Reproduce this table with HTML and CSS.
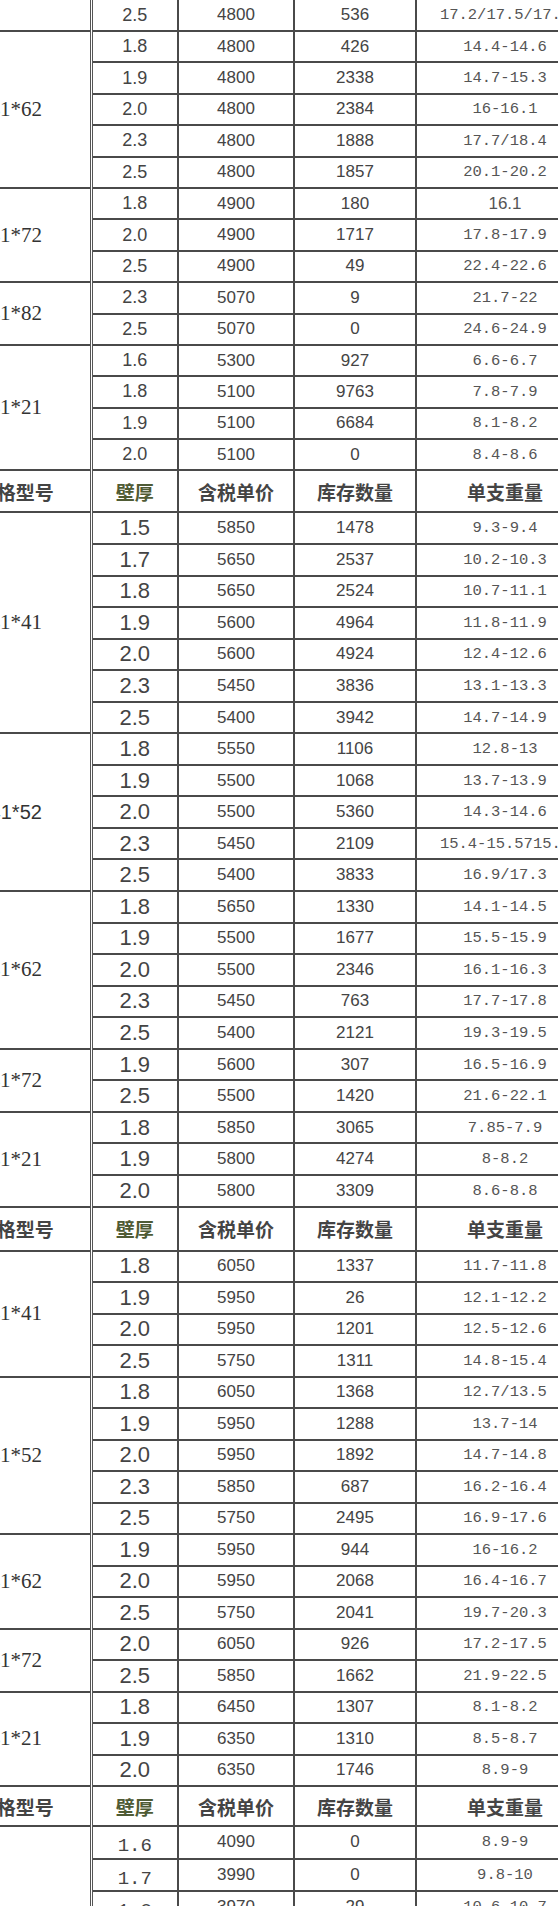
FILE: index.html
```html
<!DOCTYPE html>
<html lang="zh-CN">
<head>
<meta charset="utf-8">
<title>价格表</title>
<link rel="stylesheet" href="styles.css">
</head>
<body>
<table class="sheet">
  <colgroup>
    <col class="w-size"><col class="w-wall"><col class="w-price"><col class="w-stock"><col class="w-weight">
  </colgroup>
  <tbody class="s1">
    <tr class="first"><td class="size"></td><td class="wall">2.5</td><td class="price">4800</td><td class="stock">536</td><td class="weight">17.2/17.5/17.8</td></tr>
    <tr><td class="size" rowspan="5">41*62</td><td class="wall">1.8</td><td class="price">4800</td><td class="stock">426</td><td class="weight">14.4-14.6</td></tr>
    <tr><td class="wall">1.9</td><td class="price">4800</td><td class="stock">2338</td><td class="weight">14.7-15.3</td></tr>
    <tr><td class="wall">2.0</td><td class="price">4800</td><td class="stock">2384</td><td class="weight">16-16.1</td></tr>
    <tr><td class="wall">2.3</td><td class="price">4800</td><td class="stock">1888</td><td class="weight">17.7/18.4</td></tr>
    <tr><td class="wall">2.5</td><td class="price">4800</td><td class="stock">1857</td><td class="weight">20.1-20.2</td></tr>
    <tr><td class="size" rowspan="3">41*72</td><td class="wall">1.8</td><td class="price">4900</td><td class="stock">180</td><td class="weight sans">16.1</td></tr>
    <tr><td class="wall">2.0</td><td class="price">4900</td><td class="stock">1717</td><td class="weight">17.8-17.9</td></tr>
    <tr><td class="wall">2.5</td><td class="price">4900</td><td class="stock">49</td><td class="weight">22.4-22.6</td></tr>
    <tr><td class="size" rowspan="2">41*82</td><td class="wall">2.3</td><td class="price">5070</td><td class="stock">9</td><td class="weight">21.7-22</td></tr>
    <tr><td class="wall">2.5</td><td class="price">5070</td><td class="stock">0</td><td class="weight">24.6-24.9</td></tr>
    <tr><td class="size" rowspan="4">41*21</td><td class="wall">1.6</td><td class="price">5300</td><td class="stock">927</td><td class="weight">6.6-6.7</td></tr>
    <tr><td class="wall">1.8</td><td class="price">5100</td><td class="stock">9763</td><td class="weight">7.8-7.9</td></tr>
    <tr><td class="wall">1.9</td><td class="price">5100</td><td class="stock">6684</td><td class="weight">8.1-8.2</td></tr>
    <tr><td class="wall">2.0</td><td class="price">5100</td><td class="stock">0</td><td class="weight">8.4-8.6</td></tr>
  </tbody>
  <tbody class="s2">
    <tr class="head"><td>规格型号</td><td class="olive">壁厚</td><td>含税单价</td><td>库存数量</td><td>单支重量</td></tr>
    <tr><td class="size" rowspan="7">41*41</td><td class="wall">1.5</td><td class="price">5850</td><td class="stock">1478</td><td class="weight">9.3-9.4</td></tr>
    <tr><td class="wall">1.7</td><td class="price">5650</td><td class="stock">2537</td><td class="weight">10.2-10.3</td></tr>
    <tr><td class="wall">1.8</td><td class="price">5650</td><td class="stock">2524</td><td class="weight">10.7-11.1</td></tr>
    <tr><td class="wall">1.9</td><td class="price">5600</td><td class="stock">4964</td><td class="weight">11.8-11.9</td></tr>
    <tr><td class="wall">2.0</td><td class="price">5600</td><td class="stock">4924</td><td class="weight">12.4-12.6</td></tr>
    <tr><td class="wall">2.3</td><td class="price">5450</td><td class="stock">3836</td><td class="weight">13.1-13.3</td></tr>
    <tr><td class="wall">2.5</td><td class="price">5400</td><td class="stock">3942</td><td class="weight">14.7-14.9</td></tr>
    <tr><td class="size sans-label" rowspan="5">41*52</td><td class="wall">1.8</td><td class="price">5550</td><td class="stock">1106</td><td class="weight">12.8-13</td></tr>
    <tr><td class="wall">1.9</td><td class="price">5500</td><td class="stock">1068</td><td class="weight">13.7-13.9</td></tr>
    <tr><td class="wall">2.0</td><td class="price">5500</td><td class="stock">5360</td><td class="weight">14.3-14.6</td></tr>
    <tr><td class="wall">2.3</td><td class="price">5450</td><td class="stock">2109</td><td class="weight">15.4-15.5715.8</td></tr>
    <tr><td class="wall">2.5</td><td class="price">5400</td><td class="stock">3833</td><td class="weight">16.9/17.3</td></tr>
    <tr><td class="size" rowspan="5">41*62</td><td class="wall">1.8</td><td class="price">5650</td><td class="stock">1330</td><td class="weight">14.1-14.5</td></tr>
    <tr><td class="wall">1.9</td><td class="price">5500</td><td class="stock">1677</td><td class="weight">15.5-15.9</td></tr>
    <tr><td class="wall">2.0</td><td class="price">5500</td><td class="stock">2346</td><td class="weight">16.1-16.3</td></tr>
    <tr><td class="wall">2.3</td><td class="price">5450</td><td class="stock">763</td><td class="weight">17.7-17.8</td></tr>
    <tr><td class="wall">2.5</td><td class="price">5400</td><td class="stock">2121</td><td class="weight">19.3-19.5</td></tr>
    <tr><td class="size" rowspan="2">41*72</td><td class="wall">1.9</td><td class="price">5600</td><td class="stock">307</td><td class="weight">16.5-16.9</td></tr>
    <tr><td class="wall">2.5</td><td class="price">5500</td><td class="stock">1420</td><td class="weight">21.6-22.1</td></tr>
    <tr><td class="size" rowspan="3">41*21</td><td class="wall">1.8</td><td class="price">5850</td><td class="stock">3065</td><td class="weight">7.85-7.9</td></tr>
    <tr><td class="wall">1.9</td><td class="price">5800</td><td class="stock">4274</td><td class="weight">8-8.2</td></tr>
    <tr><td class="wall">2.0</td><td class="price">5800</td><td class="stock">3309</td><td class="weight">8.6-8.8</td></tr>
  </tbody>
  <tbody class="s3">
    <tr class="head"><td>规格型号</td><td class="olive">壁厚</td><td>含税单价</td><td>库存数量</td><td>单支重量</td></tr>
    <tr><td class="size" rowspan="4">41*41</td><td class="wall">1.8</td><td class="price">6050</td><td class="stock">1337</td><td class="weight">11.7-11.8</td></tr>
    <tr><td class="wall">1.9</td><td class="price">5950</td><td class="stock">26</td><td class="weight">12.1-12.2</td></tr>
    <tr><td class="wall">2.0</td><td class="price">5950</td><td class="stock">1201</td><td class="weight">12.5-12.6</td></tr>
    <tr><td class="wall">2.5</td><td class="price">5750</td><td class="stock">1311</td><td class="weight">14.8-15.4</td></tr>
    <tr><td class="size" rowspan="5">41*52</td><td class="wall">1.8</td><td class="price">6050</td><td class="stock">1368</td><td class="weight">12.7/13.5</td></tr>
    <tr><td class="wall">1.9</td><td class="price">5950</td><td class="stock">1288</td><td class="weight">13.7-14</td></tr>
    <tr><td class="wall">2.0</td><td class="price">5950</td><td class="stock">1892</td><td class="weight">14.7-14.8</td></tr>
    <tr><td class="wall">2.3</td><td class="price">5850</td><td class="stock">687</td><td class="weight">16.2-16.4</td></tr>
    <tr><td class="wall">2.5</td><td class="price">5750</td><td class="stock">2495</td><td class="weight">16.9-17.6</td></tr>
    <tr><td class="size" rowspan="3">41*62</td><td class="wall">1.9</td><td class="price">5950</td><td class="stock">944</td><td class="weight">16-16.2</td></tr>
    <tr><td class="wall">2.0</td><td class="price">5950</td><td class="stock">2068</td><td class="weight">16.4-16.7</td></tr>
    <tr><td class="wall">2.5</td><td class="price">5750</td><td class="stock">2041</td><td class="weight">19.7-20.3</td></tr>
    <tr><td class="size" rowspan="2">41*72</td><td class="wall">2.0</td><td class="price">6050</td><td class="stock">926</td><td class="weight">17.2-17.5</td></tr>
    <tr><td class="wall">2.5</td><td class="price">5850</td><td class="stock">1662</td><td class="weight">21.9-22.5</td></tr>
    <tr><td class="size" rowspan="3">41*21</td><td class="wall">1.8</td><td class="price">6450</td><td class="stock">1307</td><td class="weight">8.1-8.2</td></tr>
    <tr><td class="wall">1.9</td><td class="price">6350</td><td class="stock">1310</td><td class="weight">8.5-8.7</td></tr>
    <tr><td class="wall">2.0</td><td class="price">6350</td><td class="stock">1746</td><td class="weight">8.9-9</td></tr>
  </tbody>
  <tbody class="s4">
    <tr class="head"><td>规格型号</td><td class="olive">壁厚</td><td>含税单价</td><td>库存数量</td><td>单支重量</td></tr>
    <tr><td class="size" rowspan="3"></td><td class="wall mono">1.6</td><td class="price">4090</td><td class="stock">0</td><td class="weight">8.9-9</td></tr>
    <tr><td class="wall mono">1.7</td><td class="price">3990</td><td class="stock">0</td><td class="weight">9.8-10</td></tr>
    <tr><td class="wall mono">1.8</td><td class="price">3970</td><td class="stock">29</td><td class="weight">10.6-10.7</td></tr>
  </tbody>
</table>
</body>
</html>
```

FILE: styles.css
```css
html, body {
  margin: 0;
  padding: 0;
  overflow: hidden;
  background: #ffffff;
}

.sheet {
  border-collapse: collapse;
  table-layout: fixed;
  width: 653px;
  margin: -2px 0 0 -60px;
  font-family: "Liberation Sans", Arial, sans-serif;
  color: #3d3d3d;
}

.w-size { width: 150px; }
.w-wall { width: 87px; }
.w-price { width: 116px; }
.w-stock { width: 122px; }
.w-weight { width: 178px; }

.sheet td {
  border: 2px solid #4a4a4a;
  padding: 0;
  text-align: center;
  vertical-align: middle;
  white-space: nowrap;
  overflow: hidden;
}

.sheet td.wall {
  border-left: 3px double #555;
}

.s1 tr { height: 31.4px; }
.s1 tr.first { height: 32px; }
.s2 tr { height: 31.55px; }
.s3 tr { height: 31.5px; }
.s4 tr { height: 32.5px; }
.s2 tr.head { height: 42px; }
.s3 tr.head { height: 44px; }
.s4 tr.head { height: 40px; }

.size {
  font-family: "Liberation Serif", "Times New Roman", serif;
  font-size: 21px;
  color: #333;
}

.size.sans-label {
  font-family: "Liberation Sans", Arial, sans-serif;
  font-size: 20px;
}

.wall {
  font-size: 18px;
  color: #444;
}

.s2 .wall, .s3 .wall, .s4 .wall {
  font-size: 22px;
}

.wall.mono {
  font-family: "Liberation Mono", monospace;
  font-size: 19px;
  padding-top: 8px;
}

.price, .stock {
  font-size: 17px;
  color: #444;
  padding-bottom: 8px;
}

.weight {
  font-family: "Liberation Mono", "Courier New", monospace;
  font-size: 15.5px;
  color: #555;
  padding-bottom: 4px;
}

.weight.sans {
  font-family: "Liberation Sans", Arial, sans-serif;
  font-size: 17px;
}

.head td {
  font-family: "Noto Sans CJK SC", "Noto Sans", sans-serif;
  font-weight: 700;
  font-size: 19px;
  color: #444;
  padding: 0;
}

.head td.olive {
  color: #4f5b35;
  border-left: 3px double #555;
}
```
